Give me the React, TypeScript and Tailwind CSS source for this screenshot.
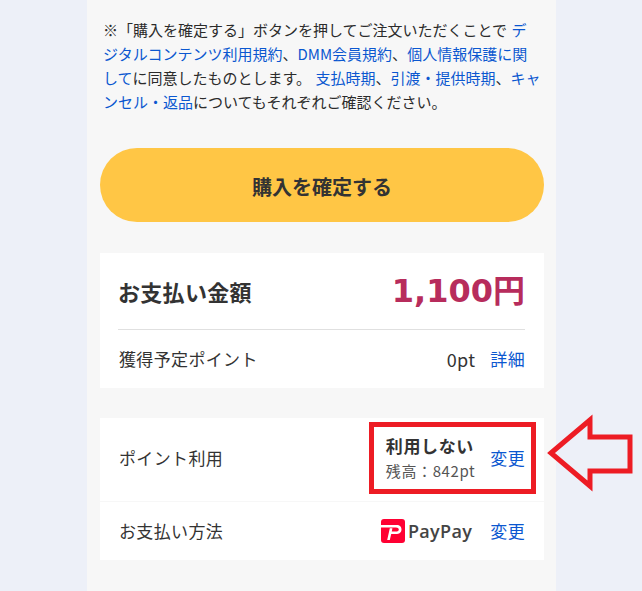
const jp = "font-['Noto_Sans_CJK_JP','Noto_Sans',sans-serif]";

function PayPayLogo() {
  return (
    <div className="flex items-center gap-[3px]">
      <svg width="24" height="24" viewBox="0 0 24 24">
        <rect width="24" height="24" rx="3" fill="#ff0033" />
        <path
          d="M0 6 H15.5 C19 6 20.5 8 20.5 10.4 C20.5 13.4 18 15 15 15 H10.2 L8.8 21 H6.2 L8.8 9.2 H11.4 L10.8 12.6 H14.8 C16.6 12.6 17.8 11.7 17.8 10.4 C17.8 9.1 16.6 8.4 15 8.4 H0 Z"
          fill="#fff"
        />
      </svg>
      <span className="font-['Open_Sans',sans-serif] text-[18px] font-semibold leading-none tracking-[0.35px] text-[#444]">
        PayPay
      </span>
    </div>
  );
}

export default function App() {
  return (
    <div className={`relative h-[591px] overflow-hidden bg-[#edf0f8] ${jp}`}>
      <div className="ml-[87px] h-full w-[469px] bg-[#f7f7f7] pl-[13px] pr-[12px]">
        <p className="whitespace-nowrap pl-[3px] pt-[18px] text-[15px] leading-[24px] text-[#2b2b2b] [word-spacing:1px]">
          ※「購入を確定する」ボタンを押してご注文いただくことで <a className="text-[#0b57d0]">デ</a>
          <br />
          <a className="text-[#0b57d0]">ジタルコンテンツ利用規約</a>、<a className="text-[#0b57d0]">DMM会員規約</a>、
          <a className="text-[#0b57d0]">個人情報保護に関</a>
          <br />
          <a className="text-[#0b57d0]">して</a>に同意したものとします。 <a className="text-[#0b57d0]">支払時期</a>、
          <a className="text-[#0b57d0]">引渡・提供時期</a>、<a className="text-[#0b57d0]">キャ</a>
          <br />
          <a className="text-[#0b57d0]">ンセル・返品</a>についてもそれぞれご確認ください。
        </p>

        <button className="mt-[34px] block h-[74px] w-[444px] rounded-full bg-[#ffc645] pt-[3px] text-[20px] font-bold text-[#333]">
          購入を確定する
        </button>

        <section className="mt-[31px] bg-white pl-[18px] pr-[19px]">
          <div className="flex h-[77px] items-center justify-between border-b border-[#e0e0e0]">
            <span className="text-[22px] font-bold tracking-[0.3px] text-[#333]">お支払い金額</span>
            <span className="font-['DejaVu_Sans','Noto_Sans_CJK_JP',sans-serif] text-[32px] font-bold leading-none text-[#b72c5c]">
              1,100円
            </span>
          </div>
          <div className="flex h-[58px] items-center justify-between text-[17px] tracking-[0.35px] text-[#333]">
            <span className="pl-px">獲得予定ポイント</span>
            <div className="flex items-center gap-[15px]">
              <span className="text-[18px]">0pt</span>
              <a className="text-[#0b57d0]">詳細</a>
            </div>
          </div>
        </section>

        <section className="mt-[30px] flex flex-col gap-px bg-[#f7f7f7]">
          <div className="flex h-[83px] items-center justify-between bg-white pb-[3px] pl-[18px] pr-[19px] text-[17px] tracking-[0.35px] text-[#333]">
            <span className="pl-px">ポイント利用</span>
            <div className="flex items-center gap-[15px]">
              <div className="flex flex-col">
                <span className="text-[17px] font-bold leading-[24px] tracking-[0.6px]">利用しない</span>
                <span className="text-[15px] leading-[25px] tracking-[0.6px] text-[#555]">残高：842pt</span>
              </div>
              <a className="text-[#0b57d0]">変更</a>
            </div>
          </div>
          <div className="flex h-[58px] items-center justify-between bg-white pl-[18px] pr-[19px] text-[17px] tracking-[0.35px] text-[#333]">
            <span className="pl-px">お支払い方法</span>
            <div className="flex items-center gap-[18px]">
              <PayPayLogo />
              <a className="text-[#0b57d0]">変更</a>
            </div>
          </div>
        </section>
      </div>

      {/* annotation drawn over the screenshot */}
      <div className="absolute left-[369px] top-[422px] h-[72px] w-[167px] border-[5px] border-[#ed1c24]" />
      <svg className="absolute left-[545px] top-[414px]" width="92" height="78" viewBox="0 0 92 78">
        <path
          d="M6 39 L45 6 V23 H85 V57 H45 V72 Z"
          fill="none"
          stroke="#ed1c24"
          strokeWidth="5"
        />
      </svg>
    </div>
  );
}
